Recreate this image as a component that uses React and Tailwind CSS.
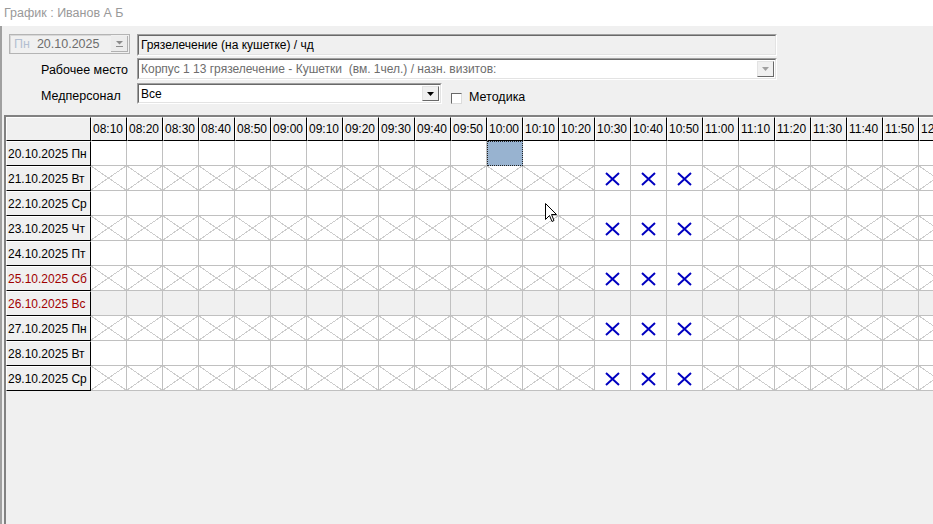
import React from "react";

const times = [];
for (let m = 8 * 60 + 10; m <= 12 * 60 + 30; m += 10) {
  times.push(
    `${String(Math.floor(m / 60)).padStart(2, "0")}:${String(m % 60).padStart(2, "0")}`
  );
}

const days = [
  { date: "20.10.2025 Пн" },
  { date: "21.10.2025 Вт", crossed: true },
  { date: "22.10.2025 Ср" },
  { date: "23.10.2025 Чт", crossed: true },
  { date: "24.10.2025 Пт" },
  { date: "25.10.2025 Сб", crossed: true, red: true },
  { date: "26.10.2025 Вс", red: true, off: true },
  { date: "27.10.2025 Пн", crossed: true },
  { date: "28.10.2025 Вт" },
  { date: "29.10.2025 Ср", crossed: true },
];

const booked = ["10:30", "10:40", "10:50"];

// sunken win32 style box
const Sunken = ({ className = "", inner = "", children }) => (
  <div
    className={`border border-t-[#a0a0a0] border-l-[#a0a0a0] border-r-white border-b-white ${className}`}
  >
    <div
      className={`h-full w-full border border-t-[#696969] border-l-[#696969] border-r-[#e3e3e3] border-b-[#e3e3e3] flex items-center ${inner}`}
    >
      {children}
    </div>
  </div>
);

const DropButton = ({ disabled }) => (
  <div className="w-[17px] h-full shrink-0 bg-[#f0f0f0] border border-t-[#e3e3e3] border-l-[#e3e3e3] border-r-[#696969] border-b-[#696969] flex items-center justify-center">
    <svg width="7" height="4" viewBox="0 0 7 4">
      <path d="M0 0H7L3.5 4Z" fill={disabled ? "#a0a0a0" : "#000"} />
    </svg>
  </div>
);

const Cell = ({ day, time, row }) => {
  if (row === 0 && time === "10:00") {
    return (
      <div className="w-[36px] h-[25px] shrink-0 bg-[#98b3d0] border border-dotted border-[#222]" />
    );
  }
  const isBooked = day.crossed && booked.includes(time);
  return (
    <div
      className={`relative w-[36px] h-[25px] shrink-0 border-r border-b border-[#c0c0c0] ${
        day.off ? "bg-[#f0f0f0]" : "bg-white"
      }`}
    >
      {day.crossed && !isBooked && (
        <svg className="absolute inset-0" width="35" height="24" shapeRendering="crispEdges">
          <line x1="0" y1="0" x2="35" y2="24" stroke="#cccccc" strokeWidth="1" />
          <line x1="35" y1="0" x2="0" y2="24" stroke="#cccccc" strokeWidth="1" />
        </svg>
      )}
      {isBooked && (
        <div className="absolute inset-0 flex items-center justify-center pt-[1px]">
          <svg width="15" height="14" viewBox="0 0 15 14">
            <path d="M1 1L14 13M14 1L1 13" stroke="#0000c0" strokeWidth="2" />
          </svg>
        </div>
      )}
    </div>
  );
};

const App = () => {
  return (
    <div className="relative w-[933px] h-[524px] overflow-hidden bg-[#f0f0f0] text-[12px] text-black font-['Liberation_Sans',Arial,sans-serif]">
      {/* title */}
      <div className="h-[26px] bg-white flex items-center pl-[4px] text-[12.5px] text-[#999999]">
        График : Иванов А Б
      </div>

      <div className="h-[498px] border-l-2 border-[#a0a0a0] flex flex-col">
        {/* row 1 */}
        <div className="flex mt-[8px] h-[21px]">
          <div className="ml-[7px] w-[121px] h-[20px] border border-[#b4b4b4] bg-[#f0f0f0] flex items-center">
            <div className="h-full flex-1 border-t border-l border-[#d8d8d8] flex items-center pl-[3px] text-[12.5px]">
              <span className="text-[#b3bfd1]">Пн</span>
              <span className="ml-[7px] text-[#6d6d6d]">20.10.2025</span>
            </div>
            <div className="w-[17px] h-[16px] mr-[1px] bg-[#ececec] border-r border-b border-[#b0b0b0] flex flex-col items-center justify-center gap-[1px]">
              <svg width="7" height="6" viewBox="0 0 7 6">
                <path d="M0 0H7L3.5 3.5Z" fill="#8c8c8c" />
                <rect x="0" y="5" width="7" height="1" fill="#8c8c8c" />
              </svg>
            </div>
          </div>
          <Sunken className="ml-[7px] w-[640px] h-[22px] bg-[#f0f0f0]" inner="pl-[2px]">
            Грязелечение (на кушетке) / чд
          </Sunken>
        </div>

        {/* row 2 */}
        <div className="flex mt-[3px] h-[22px]">
          <div className="w-[135px] pl-[39px] flex items-center pt-[2px] text-[12.5px]">Рабочее место</div>
          <Sunken className="w-[640px] h-[22px] bg-white" inner="pl-[2px] pr-[1px] py-[1px]">
            <span className="flex-1 text-[#6d6d6d] whitespace-pre">
              Корпус 1 13 грязелечение - Кушетки  (вм. 1чел.) / назн. визитов:
            </span>
            <DropButton disabled />
          </Sunken>
        </div>

        {/* row 3 */}
        <div className="flex mt-[3px] h-[21px] items-center">
          <div className="w-[135px] pl-[39px] pt-[6px] text-[12.5px]">Медперсонал</div>
          <Sunken className="w-[305px] h-[21px] bg-white" inner="pl-[2px] pr-[1px] py-[1px]">
            <span className="flex-1">Все</span>
            <DropButton />
          </Sunken>
          <div className="ml-[9px] mt-[9px] w-[11px] h-[11px] bg-white border border-t-[#696969] border-l-[#696969] border-r-[#dcdcdc] border-b-[#dcdcdc]" />
          <span className="ml-[7px] mt-[7px] text-[12.5px]">Методика</span>
        </div>

        {/* schedule grid */}
        <div className="mt-[11px] ml-[2px] flex-1 border-l-2 border-t-2 border-[#828282] overflow-hidden">
          <div className="flex w-max">
            <div className="w-[85px] h-[24px] shrink-0 border border-t-white border-l-white border-r-black border-b-black" />
            {times.map((t) => (
              <div
                key={t}
                className="w-[36px] h-[24px] shrink-0 border border-t-white border-l-white border-r-black border-b-black flex items-center pl-[1px] overflow-hidden whitespace-nowrap"
              >
                {t}
              </div>
            ))}
          </div>
          {days.map((day, i) => (
            <div key={day.date} className="flex w-max">
              <div
                className={`w-[85px] h-[25px] shrink-0 border border-t-white border-l-white border-r-black border-b-black flex items-center pl-[1px] whitespace-nowrap ${
                  day.red ? "text-[#a00000]" : ""
                }`}
              >
                {day.date}
              </div>
              {times.map((t) => (
                <Cell key={t} day={day} time={t} row={i} />
              ))}
            </div>
          ))}
        </div>
      </div>

      {/* mouse pointer */}
      <svg className="absolute left-[545px] top-[203px]" width="12" height="20" viewBox="0 0 12 20">
        <path d="M0.5 0.5V16.5L4.5 12.5L7 18.5L9 17.5L6.5 11.5H11.5Z" fill="#fff" stroke="#000" strokeWidth="1" />
      </svg>
    </div>
  );
};

export default App;
